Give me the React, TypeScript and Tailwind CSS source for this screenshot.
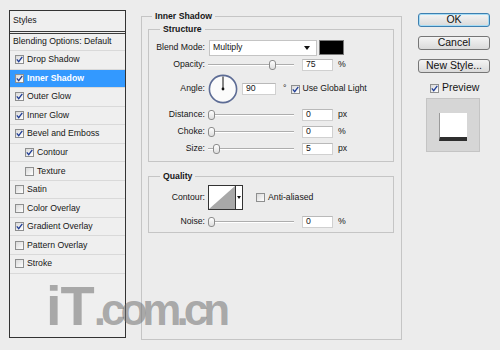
import type { ReactNode } from 'react';

function Check({ on }: { on?: boolean }) {
    return (
        <span className="w-[9px] h-[9px] shrink-0 border border-[#8e8f8f] bg-linear-to-br from-[#d9d9d9] to-white flex items-center justify-center">
            {on && (
                <svg width="7" height="7" viewBox="0 0 7 7">
                    <path d="M0.8 3.4 L2.7 5.6 L6.3 0.8" stroke="#1f3d96" strokeWidth="1.3" fill="none" />
                </svg>
            )}
        </span>
    );
}

function StyleRow({ label, on, active, indent }: { label: string; on?: boolean; active?: boolean; indent?: boolean }) {
    return (
        <div
            className={
                'h-[18.55px] shrink-0 flex items-center gap-[3px] border-b border-[#d9d9d9] ' +
                (indent ? 'pl-[15px] ' : 'pl-[5px] ') +
                (active ? 'bg-[#3399ff] text-white font-bold' : '')
            }
        >
            <Check on={on} />
            <span>{label}</span>
        </div>
    );
}

function Label({ children }: { children: ReactNode }) {
    return <span className="w-[56px] shrink-0 text-right">{children}</span>;
}

function Slider({ pos }: { pos: number }) {
    return (
        <div className="relative w-[86px] h-[12px] ml-[3px] shrink-0 flex items-center">
            <div className="w-full h-[2px] border-t border-[#adadad] border-b border-b-white" />
            <span
                className="absolute top-[1px] w-[7px] h-[10px] rounded-[3px] border border-[#8c8c8c] bg-linear-to-b from-white to-[#dedede]"
                style={{ left: pos }}
            />
        </div>
    );
}

function Field({ value, w = 31, ml = 8 }: { value: string; w?: number; ml?: number }) {
    return (
        <span
            className="h-[12px] shrink-0 bg-white border border-[#d0d0d0] border-t-[#b9b9b9] pl-[3px] flex items-center"
            style={{ width: w, marginLeft: ml }}
        >
            {value}
        </span>
    );
}

function SliderRow({ label, pos, value, unit }: { label: string; pos: number; value: string; unit: string }) {
    return (
        <div className="mt-[5px] h-[12px] flex items-center">
            <Label>{label}</Label>
            <Slider pos={pos} />
            <Field value={value} />
            <span className="ml-[5px]">{unit}</span>
        </div>
    );
}

function Button({ children, focus }: { children: ReactNode; focus?: boolean }) {
    return (
        <div
            className={
                'h-[14px] rounded-[3px] border bg-linear-to-b from-[#f4f4f4] to-[#dadada] flex items-center justify-center text-[10.5px] text-[#111] ' +
                (focus ? 'border-[#3d7fb0] shadow-[inset_0_0_0_1px_#a6dcf5]' : 'border-[#767676]')
            }
        >
            {children}
        </div>
    );
}

export default function App() {
    return (
        <div className="relative w-[500px] h-[350px] overflow-hidden bg-[#ececec] flex text-[#161616] text-[8.7px] font-['Liberation_Sans',Arial,sans-serif]">
            {/* styles list */}
            <div className="ml-[9px] mt-[10px] w-[117px] h-[328px] shrink-0 border border-[#333] flex flex-col bg-[#efefef]">
                <div className="h-[23px] shrink-0 pl-[3px] flex items-center border-b-[3px] border-double border-[#3a3a3a]">Styles</div>
                <div className="h-[17px] shrink-0 pl-[3px] flex items-center border-b border-[#d9d9d9]">Blending Options: Default</div>
                <StyleRow label="Drop Shadow" on />
                <StyleRow label="Inner Shadow" on active />
                <StyleRow label="Outer Glow" on />
                <StyleRow label="Inner Glow" on />
                <StyleRow label="Bevel and Emboss" on />
                <StyleRow label="Contour" on indent />
                <StyleRow label="Texture" indent />
                <StyleRow label="Satin" />
                <StyleRow label="Color Overlay" />
                <StyleRow label="Gradient Overlay" on />
                <StyleRow label="Pattern Overlay" />
                <StyleRow label="Stroke" />
            </div>

            {/* settings */}
            <fieldset className="ml-[15px] mt-[10px] w-[261px] h-[330px] shrink-0 border border-[#c5c5c5] px-[6px]">
                <legend className="ml-[4px] px-[3px] font-bold leading-[12px]">Inner Shadow</legend>
                <fieldset className="mt-[1px] w-[246px] border border-[#c5c5c5] pb-[6px]">
                    <legend className="ml-[11px] px-[3px] font-bold leading-[12px]">Structure</legend>
                    <div className="mt-[4px] h-[17px] flex items-center">
                        <Label>Blend Mode:</Label>
                        <div className="ml-[4px] w-[108px] h-[16px] bg-white border border-[#c4c4c4] pl-[3px] pr-[6px] flex items-center justify-between">
                            <span>Multiply</span>
                            <svg width="6" height="4" viewBox="0 0 6 4">
                                <path d="M0 0 H6 L3 4 Z" fill="#111" />
                            </svg>
                        </div>
                        <span className="ml-[2px] w-[25px] h-[15px] bg-black border border-[#7a7a7a]" />
                    </div>
                    <div className="mt-[3px] h-[12px] flex items-center">
                        <Label>Opacity:</Label>
                        <Slider pos={61} />
                        <Field value="75" />
                        <span className="ml-[5px]">%</span>
                    </div>
                    <div className="mt-[3px] h-[30px] flex items-center">
                        <Label>Angle:</Label>
                        <svg className="ml-[3px] shrink-0" width="30" height="30" viewBox="0 0 30 30">
                            <circle cx="15" cy="15" r="13.6" fill="#fbfbfb" stroke="#5d6c95" strokeWidth="1.6" />
                            <line x1="15" y1="15" x2="15" y2="2.5" stroke="#111" strokeWidth="1" />
                            <circle cx="15" cy="15" r="1.4" fill="#111" />
                        </svg>
                        <Field value="90" w={34} ml={4} />
                        <span className="ml-[7px]">°</span>
                        <span className="ml-[5px]"><Check on /></span>
                        <span className="ml-[2px]">Use Global Light</span>
                    </div>
                    <SliderRow label="Distance:" pos={0} value="0" unit="px" />
                    <SliderRow label="Choke:" pos={0} value="0" unit="%" />
                    <SliderRow label="Size:" pos={5} value="5" unit="px" />
                </fieldset>

                <fieldset className="mt-[8px] w-[246px] border border-[#c5c5c5] pb-[4px]">
                    <legend className="ml-[11px] px-[3px] font-bold leading-[12px]">Quality</legend>
                    <div className="mt-[3px] h-[25px] flex items-center">
                        <Label>Contour:</Label>
                        <div className="ml-[3px] h-[25px] flex border border-[#333] bg-white">
                            <svg width="26" height="23" viewBox="0 0 26 23">
                                <path d="M0 23 L26 0 V23 Z" fill="#a8a8a8" />
                            </svg>
                            <div className="w-[7px] border-l border-[#333] flex items-center justify-center">
                                <svg width="4" height="3" viewBox="0 0 4 3">
                                    <path d="M0 0 H4 L2 3 Z" fill="#111" />
                                </svg>
                            </div>
                        </div>
                        <span className="ml-[13px]"><Check /></span>
                        <span className="ml-[3px]">Anti-aliased</span>
                    </div>
                    <div className="mt-[6px] h-[12px] flex items-center">
                        <Label>Noise:</Label>
                        <Slider pos={0} />
                        <Field value="0" />
                        <span className="ml-[5px]">%</span>
                    </div>
                </fieldset>
            </fieldset>

            {/* buttons */}
            <div className="ml-[16px] w-[72px] shrink-0 flex flex-col">
                <div className="mt-[13px]"><Button focus>OK</Button></div>
                <div className="mt-[9px]"><Button>Cancel</Button></div>
                <div className="mt-[9px]"><Button>New Style...</Button></div>
                <div className="mt-[9px] h-[12px] pl-[12px] flex items-center gap-[3px] text-[10.5px]">
                    <Check on />
                    <span>Preview</span>
                </div>
                <div className="mt-[4px] ml-[8px] w-[54px] h-[54px] bg-[#d6d6d6] border border-[#c4c4c4] flex items-center justify-center">
                    <div className="mt-[3px] w-[28px] h-[28px] bg-white border-l border-[#9a9a9a] border-b-[4px] border-b-[#2e2e2e]" />
                </div>
            </div>

            {/* watermark */}
            <div className="absolute left-[46px] top-[278px] leading-none font-bold text-[rgba(110,110,110,0.55)] whitespace-nowrap font-['Liberation_Sans',Arial,sans-serif]">
                <span className="text-[56px] tracking-[-1px]">iT</span>
                <span className="text-[44px] tracking-[-5px]">.com.cn</span>
            </div>
        </div>
    );
}
